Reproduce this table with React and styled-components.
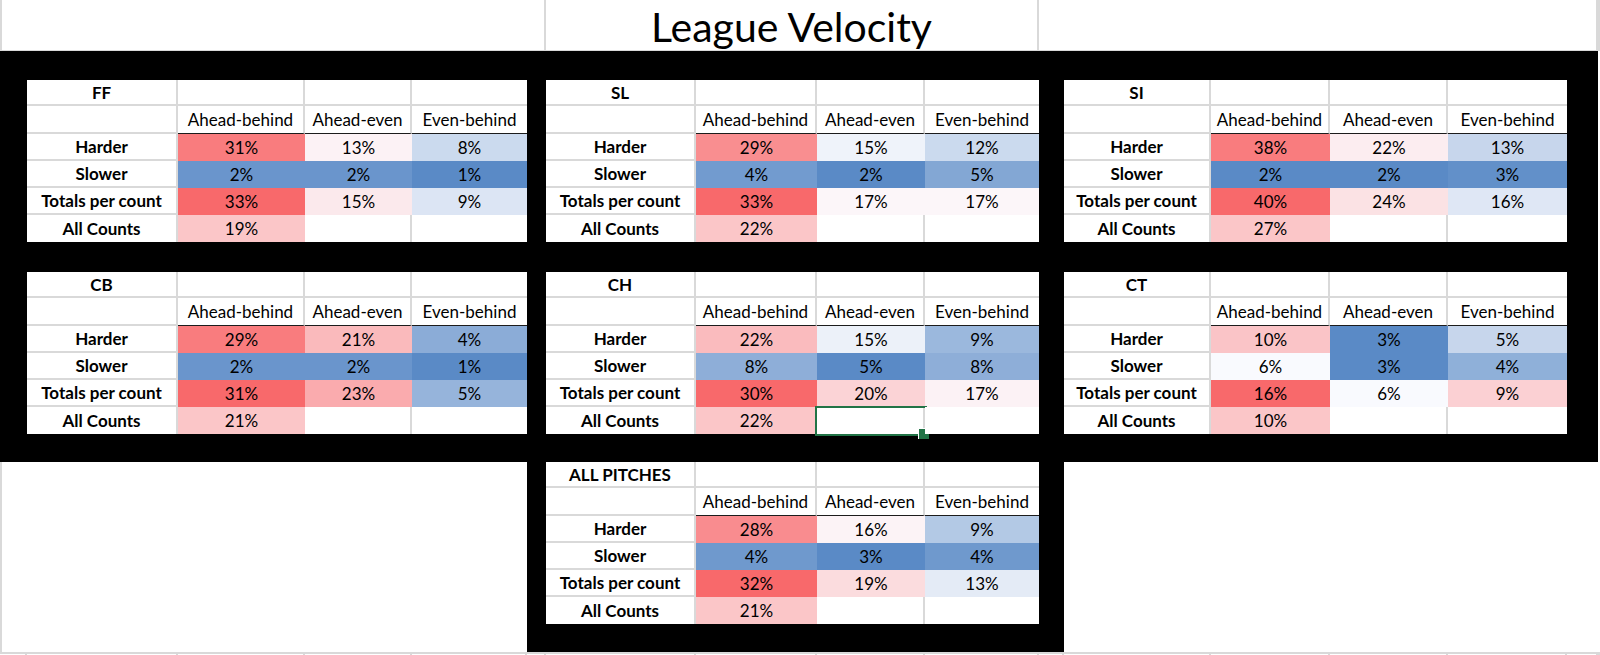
import React from "react";
import styled, { createGlobalStyle } from "styled-components";

const GRID = "#d9d9d9";
const GREEN = "#217346";

// spreadsheet column widths, A..P
const SHEET_COLS = [27, 151, 127, 107, 115, 19, 150, 121, 108, 114, 25, 147, 119, 118, 119, 31];
const sheetTemplate = SHEET_COLS.map((w) => `${w}px`).join(" ");

const LEFT_COLS = [151, 127, 107, 115];
const MID_COLS = [150, 121, 108, 114];
const RIGHT_COLS = [147, 119, 118, 119];

const HEADS = ["Ahead-behind", "Ahead-even", "Even-behind"];
const ROW_LABELS = ["Harder", "Slower", "Totals per count"];

// excel red - white - blue color scale
const WHITE = [252, 252, 255];
const RED = [248, 105, 107];
const BLUE = [90, 138, 198];

const heatColor = (h) => {
  const to = h >= 0 ? RED : BLUE;
  const t = Math.min(Math.abs(h), 1);
  const [r, g, b] = WHITE.map((w, i) => Math.round(w + (to[i] - w) * t));
  return `rgb(${r}, ${g}, ${b})`;
};

const TABLES = [
  {
    name: "FF",
    cols: LEFT_COLS,
    col: "2 / 6",
    row: 2,
    rows: [
      [["31%", 0.87], ["13%", 0.07], ["8%", -0.3]],
      [["2%", -0.9], ["2%", -0.9], ["1%", -1]],
      [["33%", 1], ["15%", 0.13], ["9%", -0.2]],
    ],
    all: "19%",
  },
  {
    name: "SL",
    cols: MID_COLS,
    col: "7 / 11",
    row: 2,
    rows: [
      [["29%", 0.75], ["15%", -0.08], ["12%", -0.3]],
      [["4%", -0.85], ["2%", -1], ["5%", -0.75]],
      [["33%", 1], ["17%", 0.04], ["17%", 0.04]],
    ],
    all: "22%",
  },
  {
    name: "SI",
    cols: RIGHT_COLS,
    col: "12 / 16",
    row: 2,
    rows: [
      [["38%", 0.87], ["22%", 0.1], ["13%", -0.33]],
      [["2%", -1], ["2%", -1], ["3%", -0.95]],
      [["40%", 1], ["24%", 0.18], ["16%", -0.18]],
    ],
    all: "27%",
  },
  {
    name: "CB",
    cols: LEFT_COLS,
    col: "2 / 6",
    row: 4,
    rows: [
      [["29%", 0.87], ["21%", 0.45], ["4%", -0.7]],
      [["2%", -0.9], ["2%", -0.9], ["1%", -1]],
      [["31%", 1], ["23%", 0.55], ["5%", -0.63]],
    ],
    all: "21%",
  },
  {
    name: "CH",
    cols: MID_COLS,
    col: "7 / 11",
    row: 4,
    rows: [
      [["22%", 0.44], ["15%", -0.1], ["9%", -0.6]],
      [["8%", -0.68], ["5%", -1], ["8%", -0.68]],
      [["30%", 1], ["20%", 0.28], ["17%", 0.07]],
    ],
    all: "22%",
    selected: true,
  },
  {
    name: "CT",
    cols: RIGHT_COLS,
    col: "12 / 16",
    row: 4,
    rows: [
      [["10%", 0.38], ["3%", -1], ["5%", -0.33]],
      [["6%", -0.02], ["3%", -1], ["4%", -0.67]],
      [["16%", 1], ["6%", -0.02], ["9%", 0.3]],
    ],
    all: "10%",
  },
];

const ALL_PITCHES = {
  name: "ALL PITCHES",
  cols: MID_COLS,
  rows: [
    [["28%", 0.76], ["16%", 0.06], ["9%", -0.45]],
    [["4%", -0.87], ["3%", -1], ["4%", -0.87]],
    [["32%", 1], ["19%", 0.22], ["13%", -0.15]],
  ],
  all: "21%",
};

const PitchTable = ({ table }) => (
  <TableGrid $cols={table.cols} $col={table.col} $row={table.row}>
    <Cell $bold>{table.name}</Cell>
    <Cell />
    <Cell />
    <Cell $last />
    <Cell />
    {HEADS.map((head, i) => (
      <HeadCell key={head} $last={i === 2}>
        {head}
      </HeadCell>
    ))}
    {ROW_LABELS.map((label, r) => (
      <React.Fragment key={label}>
        <Cell $bold>{label}</Cell>
        {table.rows[r].map(([value, heat], i) => (
          <HeatCell key={i} $heat={heat}>
            {value}
          </HeatCell>
        ))}
      </React.Fragment>
    ))}
    <Cell $bold $bottom>
      All Counts
    </Cell>
    <HeatCell $heat={0.37}>{table.all}</HeatCell>
    <Cell $bottom>{table.selected && <Selection />}</Cell>
    <Cell $bottom $last />
  </TableGrid>
);

const App = () => (
  <>
    <GlobalStyle />
    <Sheet>
      <TitleRow>
        <TitleCell $span="1 / 7" $first />
        <Title $span="7 / 11">League Velocity</Title>
        <TitleCell $span="11 / 17" />
        <TitleCell $span="17 / 18" />
      </TitleRow>
      <Board>
        {TABLES.map((table) => (
          <PitchTable key={table.name} table={table} />
        ))}
      </Board>
      <LowerRow>
        <Blank $span="1 / 6" $first />
        <BlackPad>
          <PitchTable table={ALL_PITCHES} />
        </BlackPad>
        <Blank $span="12 / 18" />
      </LowerRow>
      <Tail>
        {[...SHEET_COLS, 0].map((_, i) => (
          <TailCell key={i} />
        ))}
      </Tail>
    </Sheet>
  </>
);

const GlobalStyle = createGlobalStyle`
  html, body {
    margin: 0;
    padding: 0;
    background: #fff;
  }
  body {
    font-family: Lato, "Open Sans", sans-serif;
    color: #000;
    overflow: hidden;
  }
  * {
    box-sizing: border-box;
  }
`;

const Sheet = styled.div`
  width: 1600px;
  height: 655px;
  display: flex;
  flex-direction: column;
  overflow: hidden;
`;

const TitleRow = styled.div`
  display: grid;
  grid-template-columns: ${sheetTemplate} 1fr;
  height: 51px;
  flex: none;
`;

const TitleCell = styled.div`
  grid-column: ${(p) => p.$span};
  border-right: 2px solid ${GRID};
  border-bottom: 1px solid ${GRID};
  ${(p) => p.$first && `border-left: 2px solid ${GRID};`}
`;

const Title = styled(TitleCell)`
  font-size: 41px;
  line-height: 41px;
  text-align: center;
  padding-top: 6px;
  white-space: nowrap;
`;

const Board = styled.div`
  display: grid;
  width: 1598px;
  grid-template-columns: ${sheetTemplate};
  grid-template-rows: 29px 162px 30px 162px 28px;
  background: #000;
  flex: none;
`;

const TableGrid = styled.div`
  display: grid;
  grid-template-columns: ${(p) => p.$cols.map((w) => `${w}px`).join(" ")};
  grid-template-rows: 26px 28px 27px 27px 27px 27px;
  ${(p) => p.$col && `grid-column: ${p.$col};`}
  ${(p) => p.$row && `grid-row: ${p.$row};`}
`;

const Cell = styled.div`
  position: relative;
  display: flex;
  align-items: center;
  justify-content: center;
  background: #fff;
  font-size: 17px;
  font-weight: ${(p) => (p.$bold ? 700 : 400)};
  white-space: nowrap;
  border-right: ${(p) => (p.$last ? "none" : `2px solid ${GRID}`)};
  border-bottom: ${(p) => (p.$bottom ? "none" : `2px solid ${GRID}`)};
`;

const HeadCell = styled(Cell)`
  border-bottom: 1px solid #1c1c1c;
`;

const HeatCell = styled(Cell)`
  background: ${(p) => heatColor(p.$heat)};
  border: none;
`;

const Selection = styled.span`
  position: absolute;
  inset: -1px -4px -2px -2px;
  border: 2px solid ${GREEN};
  pointer-events: none;

  &::after {
    content: "";
    position: absolute;
    right: -4px;
    bottom: -5px;
    width: 10px;
    height: 10px;
    background: ${GREEN};
    border: 1px solid #fff;
    border-right: none;
    border-bottom: none;
  }
`;

const LowerRow = styled.div`
  display: grid;
  grid-template-columns: ${sheetTemplate} 1fr;
  grid-template-rows: 162px 28px;
  flex: none;
`;

const Blank = styled.div`
  grid-column: ${(p) => p.$span};
  grid-row: 1 / 3;
  background: #fff;
  ${(p) => p.$first && `border-left: 2px solid ${GRID};`}
`;

const BlackPad = styled.div`
  grid-column: 6 / 12;
  grid-row: 1 / 3;
  background: #000;
  padding: 0 25px 28px 19px;
`;

const Tail = styled.div`
  display: grid;
  grid-template-columns: ${sheetTemplate} 1fr;
  flex: 1;
`;

const TailCell = styled.div`
  border-top: 2px solid ${GRID};
  border-right: 2px solid ${GRID};
`;

export default App;
